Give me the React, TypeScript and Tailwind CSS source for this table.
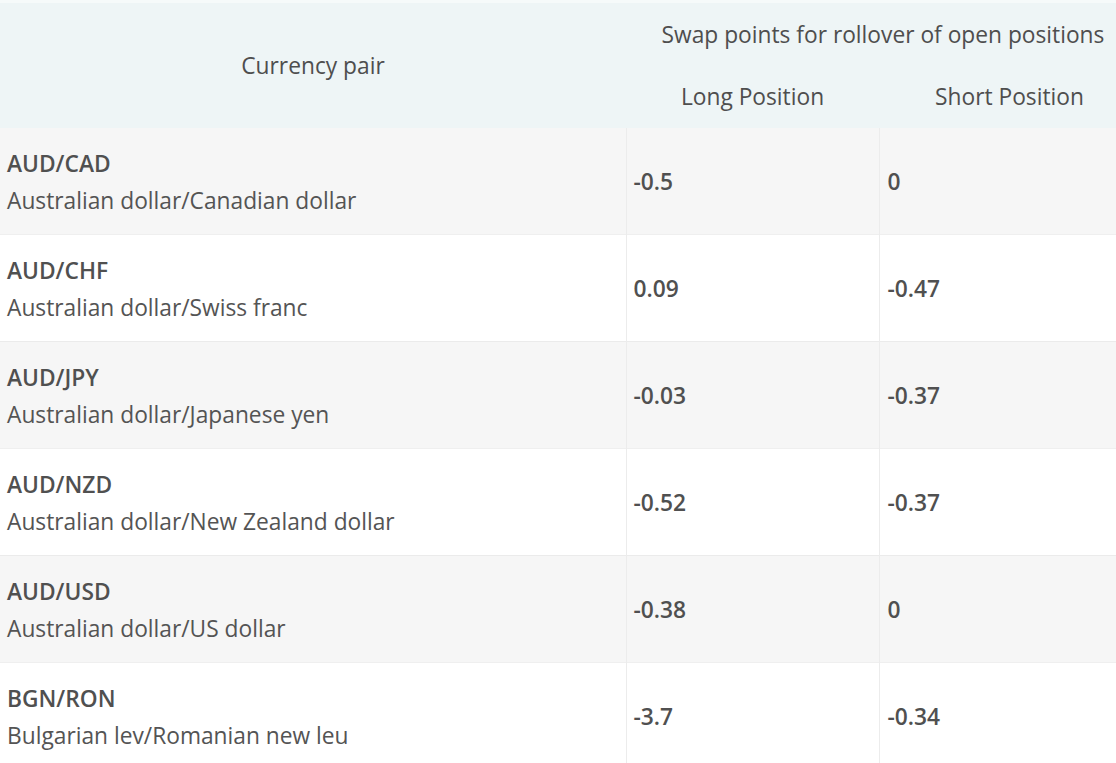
const rows = [
  { pair: "AUD/CAD", name: "Australian dollar/Canadian dollar", long: "-0.5", short: "0" },
  { pair: "AUD/CHF", name: "Australian dollar/Swiss franc", long: "0.09", short: "-0.47" },
  { pair: "AUD/JPY", name: "Australian dollar/Japanese yen", long: "-0.03", short: "-0.37" },
  { pair: "AUD/NZD", name: "Australian dollar/New Zealand dollar", long: "-0.52", short: "-0.37" },
  { pair: "AUD/USD", name: "Australian dollar/US dollar", long: "-0.38", short: "0" },
  { pair: "BGN/RON", name: "Bulgarian lev/Romanian new leu", long: "-3.7", short: "-0.34" },
];

export default function App() {
  return (
    <div className="w-[1116px] h-[763px] overflow-hidden bg-white font-['Open_Sans',sans-serif] text-[22.75px] text-[#555]">
      <div className="h-[3px] bg-[#f6fafa]" />
      <table className="w-[1140px] table-fixed border-collapse">
        <colgroup>
          <col className="w-[626px]" />
          <col className="w-[253px]" />
          <col className="w-[261px]" />
        </colgroup>
        <thead className="bg-[#eef5f6] text-[#4e4e4e]">
          <tr className="h-[62px]">
            <th rowSpan={2} className="font-medium text-center align-middle pt-[2px]">
              Currency pair
            </th>
            <th colSpan={2} className="font-medium text-center align-middle pt-[2px]">
              Swap points for rollover of open positions
            </th>
          </tr>
          <tr className="h-[63px]">
            <th className="font-medium text-center align-middle pt-[2px]">Long Position</th>
            <th className="font-medium text-center align-middle pt-[2px]">Short Position</th>
          </tr>
        </thead>
        <tbody>
          {rows.map((r, i) => (
            <tr
              key={r.pair}
              className={
                i % 2 === 0
                  ? "bg-[#f6f6f6] border-b border-[#efefef]"
                  : "bg-white border-b border-[#ebebeb]"
              }
            >
              <td className="pl-[7px] pt-[17px] pb-[15px] align-middle leading-[37px]">
                <div className="font-semibold text-[#505050]">{r.pair}</div>
                <div className="text-[#545454]">{r.name}</div>
              </td>
              <td className="pl-[7px] pt-[2px] align-middle font-semibold text-[#505050] border-l border-[#ececec]">
                {r.long}
              </td>
              <td className="pl-[8px] pt-[2px] align-middle font-semibold text-[#505050] border-l border-[#ececec]">
                {r.short}
              </td>
            </tr>
          ))}
        </tbody>
      </table>
    </div>
  );
}
